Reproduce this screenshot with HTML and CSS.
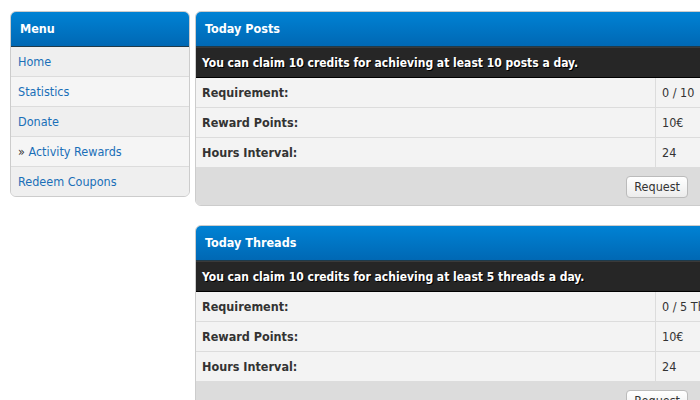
FILE: index.html
```html
<!DOCTYPE html>
<html>
<head>
	<title>Activity Rewards</title>
	<link rel="stylesheet" href="styles.css">
</head>
<body>
<div class="page">
	<div class="sidebar">
		<div class="box">
			<div class="box-head">Menu</div>
			<ul class="menu">
				<li><a href="#">Home</a></li>
				<li><a href="#">Statistics</a></li>
				<li><a href="#">Donate</a></li>
				<li class="current">&raquo; <a href="#">Activity Rewards</a></li>
				<li><a href="#">Redeem Coupons</a></li>
			</ul>
		</div>
	</div>
	<div class="content">
		<div class="box panel">
			<div class="box-head">Today Posts</div>
			<div class="notice">You can claim 10 credits for achieving at least 10 posts a day.</div>
			<table class="info">
				<tr><th>Requirement:</th><td>0 / 10</td></tr>
				<tr><th>Reward Points:</th><td>10&euro;</td></tr>
				<tr><th>Hours Interval:</th><td>24</td></tr>
			</table>
			<div class="foot"><button>Request</button></div>
		</div>
		<div class="box panel">
			<div class="box-head">Today Threads</div>
			<div class="notice">You can claim 10 credits for achieving at least 5 threads a day.</div>
			<table class="info">
				<tr><th>Requirement:</th><td>0 / 5 Threads</td></tr>
				<tr><th>Reward Points:</th><td>10&euro;</td></tr>
				<tr><th>Hours Interval:</th><td>24</td></tr>
			</table>
			<div class="foot"><button>Request</button></div>
		</div>
	</div>
</div>
</body>
</html>
```
FILE: styles.css
```css
html, body{
	margin: 0;
	background: #fff;
	overflow: hidden;
}
body{
	font-family: "DejaVu Sans Condensed", "DejaVu Sans", Verdana, sans-serif;
	font-size: 12.5px;
	color: #333;
}
.page{
	display: flex;
	align-items: flex-start;
	gap: 5px;
	padding: 11px 0 0 10px;
	width: 760px;
}
.sidebar{
	width: 180px;
	flex: none;
}
.content{
	width: 530px;
	flex: none;
	display: flex;
	flex-direction: column;
	gap: 19px;
}
.box{
	border: 1px solid #ccc;
	border-radius: 6px;
	overflow: hidden;
	background: #f3f3f3;
}
.box-head{
	height: 35px;
	line-height: 34px;
	padding: 0 9px;
	color: #fff;
	font-weight: bold;
	font-size: 12.5px;
	background: linear-gradient(#0082d4, #0068b4);
	border-bottom: 1px solid #1f3a4a;
	box-sizing: border-box;
}
.menu{
	list-style: none;
	margin: 0;
	padding: 0;
}
.menu li{
	height: 30px;
	line-height: 30px;
	padding: 0 7px;
	border-bottom: 1px solid #dcdcdc;
	background: #efefef;
	box-sizing: border-box;
	color: #333;
}
.menu li:nth-child(even){
	background: #f5f5f5;
}
.menu li:last-child{
	border-bottom: none;
	height: 29px;
}
.menu a{
	color: #1a6fb8;
	text-decoration: none;
}
.notice{
	height: 31px;
	line-height: 30px;
	padding: 0 6px;
	box-sizing: border-box;
	background: #262626;
	border-top: 1px solid #3a3a3a;
	border-bottom: 1px solid #000;
	color: #fff;
	font-size: 12px;
	font-weight: bold;
	text-shadow: 1px 1px 0 #000;
}
.info{
	width: 100%;
	border-collapse: collapse;
	table-layout: fixed;
}
.info th, .info td{
	height: 29px;
	padding: 0 6px;
	border-bottom: 1px solid #dcdcdc;
	background: #f3f3f3;
	text-align: left;
	white-space: nowrap;
	overflow: hidden;
}
.info th{
	width: 447px;
	font-weight: bold;
	border-right: 1px solid #dcdcdc;
}
.info td{
	color: #333;
}
.foot{
	height: 37px;
	background: #dcdcdc;
	display: flex;
	align-items: center;
	justify-content: flex-end;
	padding-right: 36px;
}
.foot button{
	font-family: "DejaVu Sans Condensed", "DejaVu Sans", Verdana, sans-serif;
	font-size: 12.5px;
	color: #333;
	height: 22px;
	padding: 0 7px;
	border: 1px solid #bbb;
	border-radius: 4px;
	background: linear-gradient(#fff, #ececec);
}
```
